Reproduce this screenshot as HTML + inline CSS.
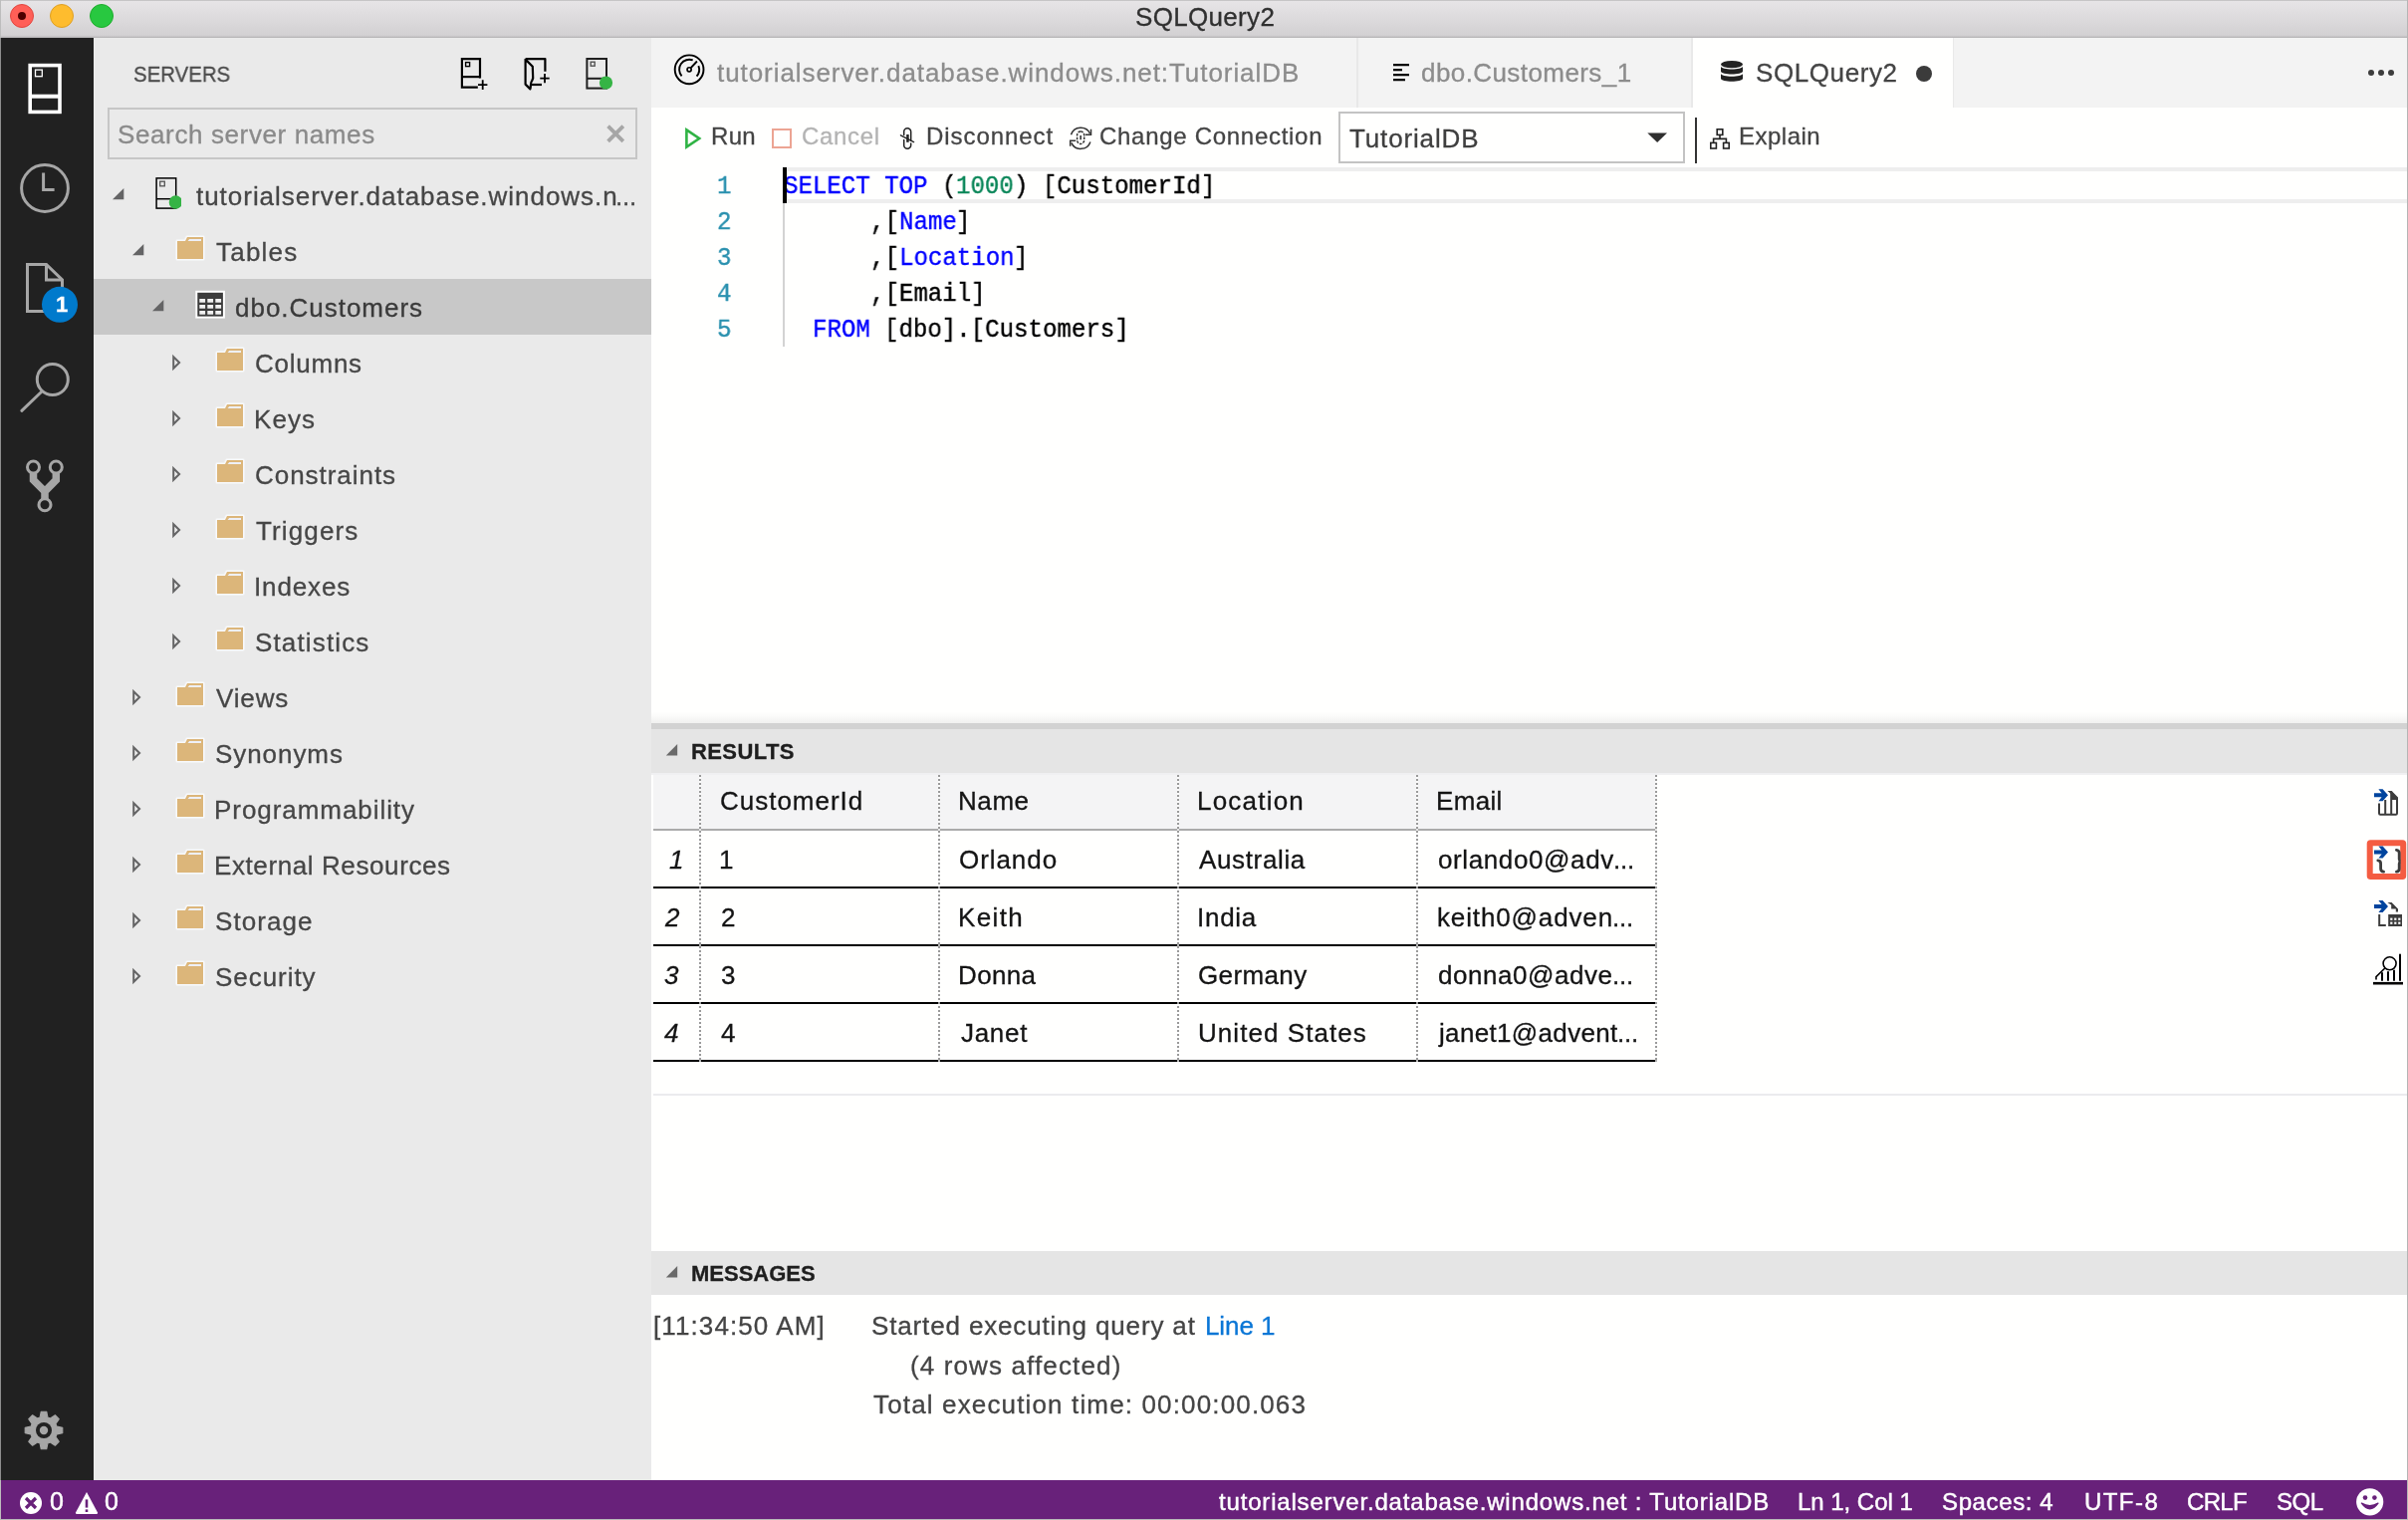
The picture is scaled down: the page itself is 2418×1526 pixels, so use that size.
<!DOCTYPE html>
<html><head><meta charset="utf-8"><title>SQLQuery2</title>
<style>
html,body{margin:0;padding:0;}
body{width:2418px;height:1526px;overflow:hidden;position:relative;background:#fffffe;font-family:"Liberation Sans",sans-serif;}
.b{position:absolute;display:block;}
.t{position:absolute;white-space:pre;font-family:"Liberation Sans",sans-serif;-webkit-text-stroke:0.3px currentColor;will-change:transform;}
.m{font-family:"Liberation Mono",monospace;font-size:26.5px;line-height:36px;letter-spacing:0;transform:scaleX(0.9088);transform-origin:0 0;-webkit-text-stroke:0.4px currentColor;}
</style></head><body>
<div class="b" style="left:0px;top:0px;width:2418px;height:38px;background:linear-gradient(#e8e6e8 0px,#e6e4e6 2px,#d3d1d3 35px,#cfcdcf 36px,#b9b7b9 37.5px);"></div>
<div class="b" style="left:0px;top:0px;width:2418px;height:1px;background:#c6c5c6;"></div>
<div class="b" style="left:10px;top:4px;width:24px;height:24px;background:#ff5f57;border-radius:50%;box-sizing:border-box;border:1px solid #e2463f;"></div>
<div class="b" style="left:50px;top:4px;width:24px;height:24px;background:#febc2e;border-radius:50%;box-sizing:border-box;border:1px solid #dfa023;"></div>
<div class="b" style="left:90px;top:4px;width:24px;height:24px;background:#28c840;border-radius:50%;box-sizing:border-box;border:1px solid #1dad2b;"></div>
<div class="b" style="left:18px;top:12px;width:8px;height:8px;background:#4d0000;border-radius:50%;"></div>
<span class="t" style="left:1139.75px;top:-1.51px;font-size:26px;line-height:36px;color:#303030;letter-spacing:0.319px;">SQLQuery2</span>
<div class="b" style="left:0px;top:38px;width:94px;height:1448px;background:#212121;"></div>
<div class="b" style="left:94px;top:38px;width:560px;height:1448px;background:#eaeaea;"></div>
<div class="b" style="left:654px;top:38px;width:1764px;height:70px;background:#f3f3f3;"></div>
<div class="b" style="left:654px;top:108px;width:1764px;height:1378px;background:#fffffe;"></div>
<div class="b" style="left:0px;top:1486px;width:2418px;height:40px;background:#68217a;"></div>
<svg class="b" style="left:0px;top:38px;" width="94" height="1448" viewBox="0 0 94 1448">
<g fill="none" stroke="#fff">
 <rect x="30.2" y="27.6" width="29.8" height="46.8" stroke-width="3.6"/>
 <line x1="30" y1="58.7" x2="60" y2="58.7" stroke-width="4"/>
 <rect x="35.5" y="32.1" width="6.8" height="6.6" stroke-width="1.3"/>
</g>
<g fill="none" stroke="#a6a6a6" stroke-width="3">
 <circle cx="45" cy="151" r="23.4"/>
 <path d="M43.6 135.5V152.5H54.6" stroke-width="3"/>
 <path d="M27.5 227.5H46.5L62.5 243V274.5H27.5Z"/>
 <path d="M46.5 227.5V243H62.5"/>
 <circle cx="52.8" cy="343" r="15.5"/>
 <path d="M41.5 355.5L21.8 374.3" stroke-linecap="round"/>
 <circle cx="33.5" cy="431" r="6"/>
 <circle cx="56.3" cy="431" r="6"/>
 <circle cx="45" cy="468.8" r="6"/>
</g>
<path d="M33.5 437V444L45 455.5L56.3 444V437M45 455V463" fill="none" stroke="#a6a6a6" stroke-width="7.5"/>
<circle cx="60" cy="267.8" r="18" fill="#007acc"/>
</svg>
<span class="t" style="left:56.20px;top:290.38px;font-size:22px;line-height:32px;color:#fff;letter-spacing:0.000px;font-weight:bold;">1</span>
<svg class="b" style="left:0px;top:1400px;" width="94" height="80" viewBox="0 0 94 80"><path d="M40.10 22.97L41.25 17.20L46.75 17.20L47.90 22.97L50.46 24.03L55.35 20.76L59.24 24.65L55.97 29.54L57.03 32.10L62.80 33.25L62.80 38.75L57.03 39.90L55.97 42.46L59.24 47.35L55.35 51.24L50.46 47.97L47.90 49.03L46.75 54.80L41.25 54.80L40.10 49.03L37.54 47.97L32.65 51.24L28.76 47.35L32.03 42.46L30.97 39.90L25.20 38.75L25.20 33.25L30.97 32.10L32.03 29.54L28.76 24.65L32.65 20.76L37.54 24.03Z" fill="#a6a6a6" stroke="#a6a6a6" stroke-width="1.1" stroke-linejoin="round"/><circle cx="44" cy="36" r="8" fill="#212121"/><circle cx="44" cy="36" r="4.2" fill="#a6a6a6"/></svg>
<span class="t" style="left:134.20px;top:58.58px;font-size:22px;line-height:32px;color:#4b4b4b;letter-spacing:0.000px;transform:scaleX(0.928);transform-origin:0 50%;">SERVERS</span>
<svg class="b" style="left:455px;top:50px;" width="170" height="48" viewBox="0 0 170 48">
<g fill="none" stroke="#000" stroke-width="2.2">
 <path d="M24.8 37.6H8.9V9.1H27V28.5"/>
 <line x1="8.9" y1="27.1" x2="27" y2="27.1"/>
 <path d="M25 35.1H34.4M29.7 30.2V40" stroke-width="1.8"/>
</g>
<rect x="12.6" y="12.6" width="4" height="4" fill="none" stroke="#000" stroke-width="1.4"/>
<g fill="none" stroke="#000" stroke-width="2.2" stroke-linejoin="round">
 <path d="M72.6 9.1H92.4V21.8"/>
 <path d="M72.6 9.1V34.6L77.4 39.4C78.5 37 77 33 79.2 31L80.2 28.5L79.8 16.8L72.6 9.6"/>
 <path d="M79 35H89"/>
 <path d="M87.3 28.6H96.7M92 23.9V33.3" stroke-width="1.8"/>
</g>
<g fill="none" stroke="#1f1f1f" stroke-width="2">
 <rect x="134.4" y="9" width="19.6" height="29.6"/>
 <line x1="134.4" y1="28.8" x2="154" y2="28.8"/>
</g>
<rect x="138.2" y="12.2" width="4" height="4" fill="none" stroke="#555" stroke-width="1.4"/>
<circle cx="153.5" cy="33" r="6.6" fill="#35b445"/>
</svg>
<div class="b" style="left:108px;top:108px;width:532px;height:52px;background:#eaeaea;box-sizing:border-box;border:2px solid #c6c6c6;"></div>
<span class="t" style="left:118.26px;top:117.29px;font-size:26px;line-height:36px;color:#8a8a8a;letter-spacing:0.616px;">Search server names</span>
<svg class="b" style="left:606px;top:122px;" width="24" height="24" viewBox="0 0 24 24"><path d="M4.6 4.6L19.8 19.8M19.8 4.6L4.6 19.8" stroke="#a6a6a6" stroke-width="3.8" fill="none"/></svg>
<div class="b" style="left:94px;top:280px;width:560px;height:56px;background:#c8c8c8;"></div>
<svg class="b" style="left:112.7px;top:189px;" width="12" height="12" viewBox="0 0 12 12"><path d="M11.3 0V11.3H0Z" fill="#646465"/></svg>
<svg class="b" style="left:155.5px;top:176px;" width="26" height="36" viewBox="0 0 26 36">
<g fill="none" stroke="#000" stroke-width="1.5">
 <rect x="1.1" y="2.9" width="19.6" height="30.2"/>
 <line x1="1.1" y1="23.7" x2="20.7" y2="23.7"/>
</g>
<rect x="4.7" y="6.2" width="4.6" height="4.6" fill="none" stroke="#555" stroke-width="1.3"/>
<circle cx="20.4" cy="27" r="6.7" fill="#35b445"/></svg>
<span class="t" style="left:196.85px;top:178.99px;font-size:26px;line-height:36px;color:#464646;letter-spacing:0.970px;">tutorialserver.database.windows.n</span>
<span class="t" style="left:618.00px;top:178.99px;font-size:26px;line-height:36px;color:#464646;letter-spacing:-0.200px;">...</span>
<svg class="b" style="left:132.7px;top:245px;" width="12" height="12" viewBox="0 0 12 12"><path d="M11.3 0V11.3H0Z" fill="#646465"/></svg>
<svg class="b" style="left:174.0px;top:234px;" width="36" height="30" viewBox="0 0 36 30">
<path d="M4 8H12L14 4H30V26H4Z" fill="#f8f9fc" stroke="#f8f9fc" stroke-width="3.6" stroke-linejoin="round" opacity="0.55"/>
<path d="M4 8H12L14 4H30V26H4Z" fill="#f8f9fc" stroke="#f8f9fc" stroke-width="2.4" stroke-linejoin="round"/>
<path d="M4 8H12L14 4H30V26H4Z" fill="#dcb67a"/>
<path d="M16.2 6H28V8H14.6Z" fill="#eef0f8"/></svg>
<span class="t" style="left:217.02px;top:234.99px;font-size:26px;line-height:36px;color:#464646;letter-spacing:1.225px;">Tables</span>
<svg class="b" style="left:152.7px;top:301px;" width="12" height="12" viewBox="0 0 12 12"><path d="M11.3 0V11.3H0Z" fill="#646465"/></svg>
<svg class="b" style="left:196.3px;top:291px;" width="31" height="30" viewBox="0 0 31 30"><rect x="0.3" y="0.8" width="29.6" height="27.8" fill="#fff"/><rect x="2.3" y="2.8" width="25.6" height="23.8" fill="#3c3c3c"/><rect x="4.3" y="9.0" width="5.8" height="3.7" fill="#f1f1f1"/><rect x="12.3" y="9.0" width="5.8" height="3.7" fill="#f1f1f1"/><rect x="20.3" y="9.0" width="5.8" height="3.7" fill="#f1f1f1"/><rect x="4.3" y="15.0" width="5.8" height="3.7" fill="#f1f1f1"/><rect x="12.3" y="15.0" width="5.8" height="3.7" fill="#f1f1f1"/><rect x="20.3" y="15.0" width="5.8" height="3.7" fill="#f1f1f1"/><rect x="4.3" y="21.0" width="5.8" height="3.7" fill="#f1f1f1"/><rect x="12.3" y="21.0" width="5.8" height="3.7" fill="#f1f1f1"/><rect x="20.3" y="21.0" width="5.8" height="3.7" fill="#f1f1f1"/></svg>
<span class="t" style="left:236.11px;top:290.99px;font-size:26px;line-height:36px;color:#3a3a3a;letter-spacing:0.983px;">dbo.Customers</span>
<svg class="b" style="left:173.2px;top:355px;" width="10" height="18" viewBox="0 0 10 18"><path d="M1.2 3.2L7.1 9L1.2 14.8Z" fill="none" stroke="#646465" stroke-width="2"/></svg>
<svg class="b" style="left:214.0px;top:346px;" width="36" height="30" viewBox="0 0 36 30">
<path d="M4 8H12L14 4H30V26H4Z" fill="#f8f9fc" stroke="#f8f9fc" stroke-width="3.6" stroke-linejoin="round" opacity="0.55"/>
<path d="M4 8H12L14 4H30V26H4Z" fill="#f8f9fc" stroke="#f8f9fc" stroke-width="2.4" stroke-linejoin="round"/>
<path d="M4 8H12L14 4H30V26H4Z" fill="#dcb67a"/>
<path d="M16.2 6H28V8H14.6Z" fill="#eef0f8"/></svg>
<span class="t" style="left:255.98px;top:346.99px;font-size:26px;line-height:36px;color:#464646;letter-spacing:0.752px;">Columns</span>
<svg class="b" style="left:173.2px;top:411px;" width="10" height="18" viewBox="0 0 10 18"><path d="M1.2 3.2L7.1 9L1.2 14.8Z" fill="none" stroke="#646465" stroke-width="2"/></svg>
<svg class="b" style="left:214.0px;top:402px;" width="36" height="30" viewBox="0 0 36 30">
<path d="M4 8H12L14 4H30V26H4Z" fill="#f8f9fc" stroke="#f8f9fc" stroke-width="3.6" stroke-linejoin="round" opacity="0.55"/>
<path d="M4 8H12L14 4H30V26H4Z" fill="#f8f9fc" stroke="#f8f9fc" stroke-width="2.4" stroke-linejoin="round"/>
<path d="M4 8H12L14 4H30V26H4Z" fill="#dcb67a"/>
<path d="M16.2 6H28V8H14.6Z" fill="#eef0f8"/></svg>
<span class="t" style="left:255.15px;top:402.99px;font-size:26px;line-height:36px;color:#464646;letter-spacing:1.059px;">Keys</span>
<svg class="b" style="left:173.2px;top:467px;" width="10" height="18" viewBox="0 0 10 18"><path d="M1.2 3.2L7.1 9L1.2 14.8Z" fill="none" stroke="#646465" stroke-width="2"/></svg>
<svg class="b" style="left:214.0px;top:458px;" width="36" height="30" viewBox="0 0 36 30">
<path d="M4 8H12L14 4H30V26H4Z" fill="#f8f9fc" stroke="#f8f9fc" stroke-width="3.6" stroke-linejoin="round" opacity="0.55"/>
<path d="M4 8H12L14 4H30V26H4Z" fill="#f8f9fc" stroke="#f8f9fc" stroke-width="2.4" stroke-linejoin="round"/>
<path d="M4 8H12L14 4H30V26H4Z" fill="#dcb67a"/>
<path d="M16.2 6H28V8H14.6Z" fill="#eef0f8"/></svg>
<span class="t" style="left:255.98px;top:458.99px;font-size:26px;line-height:36px;color:#464646;letter-spacing:0.962px;">Constraints</span>
<svg class="b" style="left:173.2px;top:523px;" width="10" height="18" viewBox="0 0 10 18"><path d="M1.2 3.2L7.1 9L1.2 14.8Z" fill="none" stroke="#646465" stroke-width="2"/></svg>
<svg class="b" style="left:214.0px;top:514px;" width="36" height="30" viewBox="0 0 36 30">
<path d="M4 8H12L14 4H30V26H4Z" fill="#f8f9fc" stroke="#f8f9fc" stroke-width="3.6" stroke-linejoin="round" opacity="0.55"/>
<path d="M4 8H12L14 4H30V26H4Z" fill="#f8f9fc" stroke="#f8f9fc" stroke-width="2.4" stroke-linejoin="round"/>
<path d="M4 8H12L14 4H30V26H4Z" fill="#dcb67a"/>
<path d="M16.2 6H28V8H14.6Z" fill="#eef0f8"/></svg>
<span class="t" style="left:257.02px;top:514.99px;font-size:26px;line-height:36px;color:#464646;letter-spacing:1.132px;">Triggers</span>
<svg class="b" style="left:173.2px;top:579px;" width="10" height="18" viewBox="0 0 10 18"><path d="M1.2 3.2L7.1 9L1.2 14.8Z" fill="none" stroke="#646465" stroke-width="2"/></svg>
<svg class="b" style="left:214.0px;top:570px;" width="36" height="30" viewBox="0 0 36 30">
<path d="M4 8H12L14 4H30V26H4Z" fill="#f8f9fc" stroke="#f8f9fc" stroke-width="3.6" stroke-linejoin="round" opacity="0.55"/>
<path d="M4 8H12L14 4H30V26H4Z" fill="#f8f9fc" stroke="#f8f9fc" stroke-width="2.4" stroke-linejoin="round"/>
<path d="M4 8H12L14 4H30V26H4Z" fill="#dcb67a"/>
<path d="M16.2 6H28V8H14.6Z" fill="#eef0f8"/></svg>
<span class="t" style="left:255.44px;top:570.99px;font-size:26px;line-height:36px;color:#464646;letter-spacing:0.855px;">Indexes</span>
<svg class="b" style="left:173.2px;top:635px;" width="10" height="18" viewBox="0 0 10 18"><path d="M1.2 3.2L7.1 9L1.2 14.8Z" fill="none" stroke="#646465" stroke-width="2"/></svg>
<svg class="b" style="left:214.0px;top:626px;" width="36" height="30" viewBox="0 0 36 30">
<path d="M4 8H12L14 4H30V26H4Z" fill="#f8f9fc" stroke="#f8f9fc" stroke-width="3.6" stroke-linejoin="round" opacity="0.55"/>
<path d="M4 8H12L14 4H30V26H4Z" fill="#f8f9fc" stroke="#f8f9fc" stroke-width="2.4" stroke-linejoin="round"/>
<path d="M4 8H12L14 4H30V26H4Z" fill="#dcb67a"/>
<path d="M16.2 6H28V8H14.6Z" fill="#eef0f8"/></svg>
<span class="t" style="left:255.80px;top:626.99px;font-size:26px;line-height:36px;color:#464646;letter-spacing:1.149px;">Statistics</span>
<svg class="b" style="left:133.2px;top:691px;" width="10" height="18" viewBox="0 0 10 18"><path d="M1.2 3.2L7.1 9L1.2 14.8Z" fill="none" stroke="#646465" stroke-width="2"/></svg>
<svg class="b" style="left:174.0px;top:682px;" width="36" height="30" viewBox="0 0 36 30">
<path d="M4 8H12L14 4H30V26H4Z" fill="#f8f9fc" stroke="#f8f9fc" stroke-width="3.6" stroke-linejoin="round" opacity="0.55"/>
<path d="M4 8H12L14 4H30V26H4Z" fill="#f8f9fc" stroke="#f8f9fc" stroke-width="2.4" stroke-linejoin="round"/>
<path d="M4 8H12L14 4H30V26H4Z" fill="#dcb67a"/>
<path d="M16.2 6H28V8H14.6Z" fill="#eef0f8"/></svg>
<span class="t" style="left:216.96px;top:682.99px;font-size:26px;line-height:36px;color:#464646;letter-spacing:0.859px;">Views</span>
<svg class="b" style="left:133.2px;top:747px;" width="10" height="18" viewBox="0 0 10 18"><path d="M1.2 3.2L7.1 9L1.2 14.8Z" fill="none" stroke="#646465" stroke-width="2"/></svg>
<svg class="b" style="left:174.0px;top:738px;" width="36" height="30" viewBox="0 0 36 30">
<path d="M4 8H12L14 4H30V26H4Z" fill="#f8f9fc" stroke="#f8f9fc" stroke-width="3.6" stroke-linejoin="round" opacity="0.55"/>
<path d="M4 8H12L14 4H30V26H4Z" fill="#f8f9fc" stroke="#f8f9fc" stroke-width="2.4" stroke-linejoin="round"/>
<path d="M4 8H12L14 4H30V26H4Z" fill="#dcb67a"/>
<path d="M16.2 6H28V8H14.6Z" fill="#eef0f8"/></svg>
<span class="t" style="left:215.80px;top:738.99px;font-size:26px;line-height:36px;color:#464646;letter-spacing:0.931px;">Synonyms</span>
<svg class="b" style="left:133.2px;top:803px;" width="10" height="18" viewBox="0 0 10 18"><path d="M1.2 3.2L7.1 9L1.2 14.8Z" fill="none" stroke="#646465" stroke-width="2"/></svg>
<svg class="b" style="left:174.0px;top:794px;" width="36" height="30" viewBox="0 0 36 30">
<path d="M4 8H12L14 4H30V26H4Z" fill="#f8f9fc" stroke="#f8f9fc" stroke-width="3.6" stroke-linejoin="round" opacity="0.55"/>
<path d="M4 8H12L14 4H30V26H4Z" fill="#f8f9fc" stroke="#f8f9fc" stroke-width="2.4" stroke-linejoin="round"/>
<path d="M4 8H12L14 4H30V26H4Z" fill="#dcb67a"/>
<path d="M16.2 6H28V8H14.6Z" fill="#eef0f8"/></svg>
<span class="t" style="left:215.15px;top:794.99px;font-size:26px;line-height:36px;color:#464646;letter-spacing:0.942px;">Programmability</span>
<svg class="b" style="left:133.2px;top:859px;" width="10" height="18" viewBox="0 0 10 18"><path d="M1.2 3.2L7.1 9L1.2 14.8Z" fill="none" stroke="#646465" stroke-width="2"/></svg>
<svg class="b" style="left:174.0px;top:850px;" width="36" height="30" viewBox="0 0 36 30">
<path d="M4 8H12L14 4H30V26H4Z" fill="#f8f9fc" stroke="#f8f9fc" stroke-width="3.6" stroke-linejoin="round" opacity="0.55"/>
<path d="M4 8H12L14 4H30V26H4Z" fill="#f8f9fc" stroke="#f8f9fc" stroke-width="2.4" stroke-linejoin="round"/>
<path d="M4 8H12L14 4H30V26H4Z" fill="#dcb67a"/>
<path d="M16.2 6H28V8H14.6Z" fill="#eef0f8"/></svg>
<span class="t" style="left:215.15px;top:850.99px;font-size:26px;line-height:36px;color:#464646;letter-spacing:0.599px;">External Resources</span>
<svg class="b" style="left:133.2px;top:915px;" width="10" height="18" viewBox="0 0 10 18"><path d="M1.2 3.2L7.1 9L1.2 14.8Z" fill="none" stroke="#646465" stroke-width="2"/></svg>
<svg class="b" style="left:174.0px;top:906px;" width="36" height="30" viewBox="0 0 36 30">
<path d="M4 8H12L14 4H30V26H4Z" fill="#f8f9fc" stroke="#f8f9fc" stroke-width="3.6" stroke-linejoin="round" opacity="0.55"/>
<path d="M4 8H12L14 4H30V26H4Z" fill="#f8f9fc" stroke="#f8f9fc" stroke-width="2.4" stroke-linejoin="round"/>
<path d="M4 8H12L14 4H30V26H4Z" fill="#dcb67a"/>
<path d="M16.2 6H28V8H14.6Z" fill="#eef0f8"/></svg>
<span class="t" style="left:215.80px;top:906.99px;font-size:26px;line-height:36px;color:#464646;letter-spacing:1.063px;">Storage</span>
<svg class="b" style="left:133.2px;top:971px;" width="10" height="18" viewBox="0 0 10 18"><path d="M1.2 3.2L7.1 9L1.2 14.8Z" fill="none" stroke="#646465" stroke-width="2"/></svg>
<svg class="b" style="left:174.0px;top:962px;" width="36" height="30" viewBox="0 0 36 30">
<path d="M4 8H12L14 4H30V26H4Z" fill="#f8f9fc" stroke="#f8f9fc" stroke-width="3.6" stroke-linejoin="round" opacity="0.55"/>
<path d="M4 8H12L14 4H30V26H4Z" fill="#f8f9fc" stroke="#f8f9fc" stroke-width="2.4" stroke-linejoin="round"/>
<path d="M4 8H12L14 4H30V26H4Z" fill="#dcb67a"/>
<path d="M16.2 6H28V8H14.6Z" fill="#eef0f8"/></svg>
<span class="t" style="left:215.80px;top:962.99px;font-size:26px;line-height:36px;color:#464646;letter-spacing:0.950px;">Security</span>
<svg class="b" style="left:674px;top:52px;" width="36" height="36" viewBox="0 0 36 36">
<g fill="none" stroke="#000" stroke-width="1.9">
 <circle cx="18.1" cy="17.8" r="14.4"/>
 <path d="M10.55 24.36A10.0 10.0 0 0 1 21.68 8.46"/>
 <path d="M27.37 14.05A10.0 10.0 0 0 1 25.53 24.49"/>
 <path d="M19.70 16.10L25.90 9.50"/>
 <circle cx="18.1" cy="17.8" r="2.05" stroke-width="1.7"/>
</g></svg>
<span class="t" style="left:720.01px;top:54.59px;font-size:26px;line-height:36px;color:#8c8c8c;letter-spacing:0.929px;">tutorialserver.database.windows.net:TutorialDB</span>
<div class="b" style="left:1362px;top:38px;width:2px;height:70px;background:#e8e8e8;"></div>
<svg class="b" style="left:1396px;top:60px;" width="24" height="24" viewBox="0 0 24 24"><path d="M3 5.1H19M3 10.1H12M3 15.1H19M3 20.1H15" stroke="#000" stroke-width="2.1" fill="none"/></svg>
<span class="t" style="left:1426.87px;top:54.59px;font-size:26px;line-height:36px;color:#8c8c8c;letter-spacing:0.421px;">dbo.Customers_1</span>
<div class="b" style="left:1699px;top:38px;width:262px;height:70px;background:#fffffe;"></div>
<div class="b" style="left:1698px;top:38px;width:1.5px;height:70px;background:#e9e9e9;"></div>
<div class="b" style="left:1960.5px;top:38px;width:1.5px;height:70px;background:#e9e9e9;"></div>
<svg class="b" style="left:1724px;top:58px;" width="30" height="28" viewBox="0 0 30 28">
<g fill="#222">
 <ellipse cx="15" cy="6.6" rx="11" ry="3.6"/>
 <path d="M4 8.6C4 12.6 26 12.6 26 8.6V13.6C26 17.6 4 17.6 4 13.6Z"/>
 <path d="M4 15.8C4 19.8 26 19.8 26 15.8V20.8C26 24.8 4 24.8 4 20.8Z"/>
</g></svg>
<span class="t" style="left:1763.41px;top:54.69px;font-size:26px;line-height:36px;color:#444;letter-spacing:0.591px;">SQLQuery2</span>
<div class="b" style="left:1924px;top:66px;width:16px;height:16px;background:#3b3b3b;border-radius:50%;"></div>
<div class="b" style="left:2377.7000000000003px;top:69.8px;width:6.4px;height:6.4px;background:#3c3c3c;border-radius:50%;"></div>
<div class="b" style="left:2387.7000000000003px;top:69.8px;width:6.4px;height:6.4px;background:#3c3c3c;border-radius:50%;"></div>
<div class="b" style="left:2397.7000000000003px;top:69.8px;width:6.4px;height:6.4px;background:#3c3c3c;border-radius:50%;"></div>
<svg class="b" style="left:684px;top:124px;" width="24" height="30" viewBox="0 0 24 30"><path d="M5.4 6.4L18.2 15L5.4 23.6Z" fill="none" stroke="#2fb344" stroke-width="2.6" stroke-linejoin="miter"/></svg>
<span class="t" style="left:713.66px;top:120.48px;font-size:24px;line-height:34px;color:#444;letter-spacing:0.344px;">Run</span>
<div class="b" style="left:775px;top:128.5px;width:20px;height:20.5px;background:transparent;box-sizing:border-box;border:2.5px solid #eca493;"></div>
<span class="t" style="left:805.31px;top:120.48px;font-size:24px;line-height:34px;color:#b3b3b3;letter-spacing:0.679px;">Cancel</span>
<svg class="b" style="left:900px;top:124px;" width="24" height="30" viewBox="0 0 24 30">
<g fill="none" stroke="#222" stroke-width="1.5" stroke-linecap="round">
 <path d="M7.7 11.6V8.3A3.5 3.5 0 0 1 14.7 8.3V17.2"/>
 <path d="M7.7 16.6V21.8A3.5 3.5 0 0 0 14.7 21.8V20"/>
 <path d="M4.4 11.8L17.6 18.6" stroke-width="1.3"/>
</g>
<rect x="10.2" y="11" width="2.5" height="7.8" fill="#222"/></svg>
<span class="t" style="left:929.66px;top:120.48px;font-size:24px;line-height:34px;color:#444;letter-spacing:0.933px;">Disconnect</span>
<svg class="b" style="left:1070px;top:123.2px;" width="30" height="30" viewBox="0 0 30 30">
<g fill="none" stroke="#333" stroke-width="1.5">
 <path d="M5.5 12.2A10.3 10.3 0 0 1 24.6 11.2"/>
 <path d="M24.9 19.4A10.3 10.3 0 0 1 5.8 20.4"/>
 <path d="M25.5 6.8V12.3H20"/>
 <path d="M4.7 23.8V18.3H10.2"/>
 <rect x="11.6" y="9" width="7.1" height="12.4" rx="3.55" stroke-dasharray="2.6 1.1"/>
 <path d="M15.15 13V17.2" stroke-width="1.6"/>
</g></svg>
<span class="t" style="left:1104.04px;top:120.48px;font-size:24px;line-height:34px;color:#444;letter-spacing:0.709px;">Change Connection</span>
<div class="b" style="left:1344.4px;top:112.4px;width:347.4px;height:51.4px;background:#fffffe;box-sizing:border-box;border:2px solid #c3c3c3;"></div>
<span class="t" style="left:1355.01px;top:120.59px;font-size:26px;line-height:36px;color:#3f3f3f;letter-spacing:0.848px;">TutorialDB</span>
<svg class="b" style="left:1650px;top:128px;" width="30" height="20" viewBox="0 0 30 20"><path d="M4.3 5.4H24L14.15 14.9Z" fill="#2f2f2f"/></svg>
<div class="b" style="left:1702px;top:118px;width:2px;height:46px;background:#333;"></div>
<svg class="b" style="left:1714px;top:126px;" width="28" height="28" viewBox="0 0 28 28">
<g fill="none" stroke="#222" stroke-width="1.6">
 <rect x="10.2" y="3.8" width="5.6" height="5.6"/>
 <rect x="3.8" y="17.4" width="5.6" height="5.6"/>
 <rect x="16.6" y="17.4" width="5.6" height="5.6"/>
 <path d="M13 9.4V13.4M6.6 17.4V13.4H19.4V17.4"/>
</g></svg>
<span class="t" style="left:1746.06px;top:120.48px;font-size:24px;line-height:34px;color:#444;letter-spacing:0.492px;">Explain</span>
<div class="b" style="left:786px;top:168px;width:1631px;height:4px;background:#eeeeee;"></div>
<div class="b" style="left:786px;top:200px;width:1631px;height:4px;background:#eeeeee;"></div>
<div class="b" style="left:786px;top:204px;width:2px;height:144px;background:#d3d3d3;"></div>
<span class="t m" style="left:719.60px;top:169.00px;color:#2b91af;">1</span>
<span class="t m" style="left:787.00px;top:169.00px;color:#0000ff;">SELECT TOP</span>
<span class="t m" style="left:945.95px;top:169.00px;color:#000000;">(</span>
<span class="t m" style="left:960.40px;top:169.00px;color:#098658;">1000</span>
<span class="t m" style="left:1018.20px;top:169.00px;color:#000000;">) [CustomerId]</span>
<span class="t m" style="left:719.60px;top:205.00px;color:#2b91af;">2</span>
<span class="t m" style="left:873.70px;top:205.00px;color:#000000;">,[</span>
<span class="t m" style="left:902.60px;top:205.00px;color:#0000ff;">Name</span>
<span class="t m" style="left:960.40px;top:205.00px;color:#000000;">]</span>
<span class="t m" style="left:719.60px;top:241.00px;color:#2b91af;">3</span>
<span class="t m" style="left:873.70px;top:241.00px;color:#000000;">,[</span>
<span class="t m" style="left:902.60px;top:241.00px;color:#0000ff;">Location</span>
<span class="t m" style="left:1018.20px;top:241.00px;color:#000000;">]</span>
<span class="t m" style="left:719.60px;top:277.00px;color:#2b91af;">4</span>
<span class="t m" style="left:873.70px;top:277.00px;color:#000000;">,[Email]</span>
<span class="t m" style="left:719.60px;top:313.00px;color:#2b91af;">5</span>
<span class="t m" style="left:815.90px;top:313.00px;color:#0000ff;">FROM</span>
<span class="t m" style="left:888.15px;top:313.00px;color:#000000;">[dbo].[Customers]</span>
<div class="b" style="left:786px;top:168px;width:4px;height:36px;background:#000;"></div>
<div class="b" style="left:654px;top:714px;width:1764px;height:12px;background:linear-gradient(rgba(0,0,0,0) 0%,rgba(0,0,0,0.015) 40%,rgba(0,0,0,0.06) 100%);"></div>
<div class="b" style="left:654px;top:726px;width:1764px;height:6px;background:#d2d2d2;"></div>
<div class="b" style="left:654px;top:732px;width:1764px;height:44px;background:#e5e5e5;"></div>
<div class="b" style="left:654px;top:776px;width:1764px;height:2px;background:#f0f0f2;"></div>
<svg class="b" style="left:668px;top:746px;" width="14" height="14" viewBox="0 0 14 14"><path d="M12.2 1V12.4H0.8Z" fill="#6a6a6a"/></svg>
<span class="t" style="left:693.83px;top:738.68px;font-size:22px;line-height:32px;color:#1e1e1e;letter-spacing:0.397px;font-weight:bold;">RESULTS</span>
<div class="b" style="left:656px;top:778px;width:1008px;height:54px;background:#f4f4f5;"></div>
<div class="b" style="left:656px;top:831.7px;width:1008px;height:2.2px;background:#ababab;"></div>
<span class="t" style="left:723.43px;top:786.49px;font-size:26px;line-height:36px;color:#141414;letter-spacing:0.979px;">CustomerId</span>
<span class="t" style="left:962.43px;top:786.49px;font-size:26px;line-height:36px;color:#141414;letter-spacing:0.573px;">Name</span>
<span class="t" style="left:1202.43px;top:786.49px;font-size:26px;line-height:36px;color:#141414;letter-spacing:1.216px;">Location</span>
<span class="t" style="left:1442.43px;top:786.49px;font-size:26px;line-height:36px;color:#141414;letter-spacing:0.341px;">Email</span>
<span class="t" style="left:671.99px;top:844.59px;font-size:26px;line-height:36px;color:#141414;letter-spacing:0.000px;font-style:italic;">1</span>
<span class="t" style="left:722.39px;top:844.59px;font-size:26px;line-height:36px;color:#141414;letter-spacing:0.000px;">1</span>
<span class="t" style="left:963.43px;top:844.59px;font-size:26px;line-height:36px;color:#141414;letter-spacing:0.933px;">Orlando</span>
<span class="t" style="left:1203.81px;top:844.59px;font-size:26px;line-height:36px;color:#141414;letter-spacing:0.644px;">Australia</span>
<span class="t" style="left:1443.58px;top:844.59px;font-size:26px;line-height:36px;color:#141414;letter-spacing:0.608px;">orlando0@adv</span>
<span class="t" style="left:1620.20px;top:844.59px;font-size:26px;line-height:36px;color:#141414;letter-spacing:-0.250px;">...</span>
<div class="b" style="left:656px;top:890px;width:1008px;height:2.2px;background:#000;"></div>
<span class="t" style="left:668.37px;top:902.59px;font-size:26px;line-height:36px;color:#141414;letter-spacing:0.000px;font-style:italic;">2</span>
<span class="t" style="left:723.75px;top:902.59px;font-size:26px;line-height:36px;color:#141414;letter-spacing:0.000px;">2</span>
<span class="t" style="left:962.45px;top:902.59px;font-size:26px;line-height:36px;color:#141414;letter-spacing:1.375px;">Keith</span>
<span class="t" style="left:1202.21px;top:902.59px;font-size:26px;line-height:36px;color:#141414;letter-spacing:0.726px;">India</span>
<span class="t" style="left:1443.42px;top:902.59px;font-size:26px;line-height:36px;color:#141414;letter-spacing:0.863px;">keith0@adven</span>
<span class="t" style="left:1618.60px;top:902.59px;font-size:26px;line-height:36px;color:#141414;letter-spacing:-0.250px;">...</span>
<div class="b" style="left:656px;top:948px;width:1008px;height:2.2px;background:#000;"></div>
<span class="t" style="left:667.16px;top:960.59px;font-size:26px;line-height:36px;color:#141414;letter-spacing:0.000px;font-style:italic;">3</span>
<span class="t" style="left:723.78px;top:960.59px;font-size:26px;line-height:36px;color:#141414;letter-spacing:0.000px;">3</span>
<span class="t" style="left:962.45px;top:960.59px;font-size:26px;line-height:36px;color:#141414;letter-spacing:0.357px;">Donna</span>
<span class="t" style="left:1202.73px;top:960.59px;font-size:26px;line-height:36px;color:#141414;letter-spacing:0.375px;">Germany</span>
<span class="t" style="left:1443.69px;top:960.59px;font-size:26px;line-height:36px;color:#141414;letter-spacing:0.542px;">donna0@adve</span>
<span class="t" style="left:1618.60px;top:960.59px;font-size:26px;line-height:36px;color:#141414;letter-spacing:-0.250px;">...</span>
<div class="b" style="left:656px;top:1006px;width:1008px;height:2.2px;background:#000;"></div>
<span class="t" style="left:667.17px;top:1018.59px;font-size:26px;line-height:36px;color:#141414;letter-spacing:0.000px;font-style:italic;">4</span>
<span class="t" style="left:723.67px;top:1018.59px;font-size:26px;line-height:36px;color:#141414;letter-spacing:0.000px;">4</span>
<span class="t" style="left:964.90px;top:1018.59px;font-size:26px;line-height:36px;color:#141414;letter-spacing:0.704px;">Janet</span>
<span class="t" style="left:1203.06px;top:1018.59px;font-size:26px;line-height:36px;color:#141414;letter-spacing:1.051px;">United States</span>
<span class="t" style="left:1445.23px;top:1018.59px;font-size:26px;line-height:36px;color:#141414;letter-spacing:0.335px;">janet1@advent</span>
<span class="t" style="left:1624.30px;top:1018.59px;font-size:26px;line-height:36px;color:#141414;letter-spacing:-0.250px;">...</span>
<div class="b" style="left:656px;top:1064px;width:1008px;height:2.2px;background:#000;"></div>
<div class="b" style="left:702px;top:778px;width:2px;height:288px;background:repeating-linear-gradient(#9a9a9a 0px,#9a9a9a 2px,rgba(255,255,255,0.7) 2px,rgba(255,255,255,0.7) 4px);"></div>
<div class="b" style="left:942px;top:778px;width:2px;height:288px;background:repeating-linear-gradient(#9a9a9a 0px,#9a9a9a 2px,rgba(255,255,255,0.7) 2px,rgba(255,255,255,0.7) 4px);"></div>
<div class="b" style="left:1182px;top:778px;width:2px;height:288px;background:repeating-linear-gradient(#9a9a9a 0px,#9a9a9a 2px,rgba(255,255,255,0.7) 2px,rgba(255,255,255,0.7) 4px);"></div>
<div class="b" style="left:1422px;top:778px;width:2px;height:288px;background:repeating-linear-gradient(#9a9a9a 0px,#9a9a9a 2px,rgba(255,255,255,0.7) 2px,rgba(255,255,255,0.7) 4px);"></div>
<div class="b" style="left:1662px;top:778px;width:2px;height:288px;background:repeating-linear-gradient(#9a9a9a 0px,#9a9a9a 2px,rgba(255,255,255,0.7) 2px,rgba(255,255,255,0.7) 4px);"></div>
<div class="b" style="left:656px;top:1098px;width:1761px;height:2px;background:#ebebee;"></div>
<svg class="b" style="left:2370px;top:784px;" width="47" height="210" viewBox="0 0 47 210">
<path d="M14 12.2H21.6L18.4 8.2H22.6L28 14.2L22.6 20.2H18.4L21.6 16.2H14Z" fill="#00449e"/>
<g fill="none" stroke="#3c3c3c" stroke-width="2">
 <path d="M19 22.6V32.6Q19 33.8 20.2 33.8H35.8Q37 33.8 37 32.6V17.6"/>
 <path d="M25.2 19V33M31.2 10.6V33"/>
 <path d="M31.2 18H37"/>
</g>
<path d="M27.4 10H31.6L38 16.4V18.4H31.2V13.2Z" fill="#3c3c3c"/>
<rect x="9.7" y="62.3" width="33.5" height="33.8" rx="0.8" fill="none" stroke="#f45c42" stroke-width="6"/>
<path d="M14 69.6H21.6L18.4 65.6H22.6L28 71.6L22.6 77.6H18.4L21.6 73.6H14Z" fill="#00449e"/>
<g fill="none" stroke="#3c3c3c" stroke-width="2.8" stroke-linecap="round">
 <path d="M17.8 79.8Q20.8 80 20.6 83V88Q20.6 91 23.6 91.2"/>
 <path d="M36.4 69.4Q39.4 69.6 39.2 72.6V78.4Q39.4 80.6 40.4 80.8Q39.4 81 39.2 83.2V88Q39.4 91 36.4 91.2"/>
</g>
<path d="M14 124H21.6L18.4 120H22.6L28 126L22.6 132H18.4L21.6 128H14Z" fill="#00449e"/>
<path d="M27.4 122H31.6L38 128.4V131.6H35.8V128.4H31.2V124.6Z" fill="#3c3c3c"/>
<path d="M19.2 134V145H25.8" fill="none" stroke="#3c3c3c" stroke-width="2"/>
<rect x="28.2" y="134" width="13.8" height="12" fill="#3c3c3c"/>
<g fill="#fff">
 <rect x="30.2" y="137.6" width="2.2" height="2.2"/><rect x="34.2" y="137.6" width="2.2" height="2.2"/><rect x="38.2" y="137.6" width="2.2" height="2.2"/>
 <rect x="30.2" y="141.6" width="2.2" height="2.2"/><rect x="34.2" y="141.6" width="2.2" height="2.2"/><rect x="38.2" y="141.6" width="2.2" height="2.2"/>
</g>
<g fill="none" stroke="#000">
 <circle cx="29.6" cy="183.3" r="6.5" stroke-width="1.6"/>
 <path d="M24.6 188.2L16 196.6V199" stroke-width="1.6" stroke-linecap="round"/>
 <path d="M22 193V200M28 192V200M34 190.5V200M40 174.6V200" stroke-width="2" stroke-linecap="round"/>
 <path d="M13 203.2H43" stroke-width="2.6"/>
</g>
</svg>
<div class="b" style="left:654px;top:1256px;width:1764px;height:44px;background:#e5e5e5;"></div>
<svg class="b" style="left:668px;top:1270px;" width="14" height="14" viewBox="0 0 14 14"><path d="M12.2 1V12.4H0.8Z" fill="#6a6a6a"/></svg>
<span class="t" style="left:693.83px;top:1262.68px;font-size:22px;line-height:32px;color:#1e1e1e;letter-spacing:-0.004px;font-weight:bold;">MESSAGES</span>
<span class="t" style="left:656.41px;top:1312.69px;font-size:26px;line-height:36px;color:#444;letter-spacing:1.097px;">[11:34:50 AM]</span>
<span class="t" style="left:875.40px;top:1312.69px;font-size:26px;line-height:36px;color:#444;letter-spacing:0.854px;">Started executing query at</span>
<span class="t" style="left:1209.59px;top:1312.69px;font-size:26px;line-height:36px;color:#0a76d6;letter-spacing:-0.094px;">Line 1</span>
<span class="t" style="left:914.08px;top:1352.69px;font-size:26px;line-height:36px;color:#444;letter-spacing:1.133px;">(4 rows affected)</span>
<span class="t" style="left:877.42px;top:1392.49px;font-size:26px;line-height:36px;color:#444;letter-spacing:1.148px;">Total execution time: 00:00:00.063</span>
<svg class="b" style="left:16px;top:1494px;" width="110" height="30" viewBox="0 0 110 30">
<circle cx="15" cy="15" r="11" fill="#fff"/>
<path d="M10 10L20 20M20 10L10 20" stroke="#68217a" stroke-width="3.2" fill="none"/>
<path d="M71 4L82 24.4Q82.3 26 80.8 26H61.2Q59.7 26 60 24.4Z" fill="#fff"/>
<path d="M71 11.4V19.6" stroke="#68217a" stroke-width="2.6" fill="none"/>
<rect x="69.7" y="21.4" width="2.6" height="2.6" fill="#68217a"/>
</svg>
<span class="t" style="left:50.20px;top:1490.44px;font-size:25px;line-height:35px;color:#ffffff;letter-spacing:0.000px;-webkit-text-stroke:0.45px #fff;">0</span>
<span class="t" style="left:105.40px;top:1490.44px;font-size:25px;line-height:35px;color:#ffffff;letter-spacing:0.000px;-webkit-text-stroke:0.45px #fff;">0</span>
<span class="t" style="left:1223.52px;top:1490.78px;font-size:24px;line-height:34px;color:#ffffff;letter-spacing:0.822px;-webkit-text-stroke:0.45px #fff;">tutorialserver.database.windows.net : TutorialDB</span>
<span class="t" style="left:1805.42px;top:1490.78px;font-size:24px;line-height:34px;color:#ffffff;letter-spacing:-0.030px;-webkit-text-stroke:0.45px #fff;">Ln 1, Col 1</span>
<span class="t" style="left:1950.28px;top:1490.78px;font-size:24px;line-height:34px;color:#ffffff;letter-spacing:0.622px;-webkit-text-stroke:0.45px #fff;">Spaces: 4</span>
<span class="t" style="left:2093.14px;top:1490.78px;font-size:24px;line-height:34px;color:#ffffff;letter-spacing:1.437px;-webkit-text-stroke:0.45px #fff;">UTF-8</span>
<span class="t" style="left:2196.08px;top:1490.78px;font-size:24px;line-height:34px;color:#ffffff;letter-spacing:-0.689px;-webkit-text-stroke:0.45px #fff;">CRLF</span>
<span class="t" style="left:2286.28px;top:1490.78px;font-size:24px;line-height:34px;color:#ffffff;letter-spacing:-0.464px;-webkit-text-stroke:0.45px #fff;">SQL</span>
<svg class="b" style="left:2364px;top:1492px;" width="32" height="32" viewBox="0 0 32 32">
<circle cx="15.7" cy="15.8" r="13.6" fill="#fff"/>
<circle cx="11" cy="11.6" r="2.3" fill="#68217a"/><circle cx="20.4" cy="11.6" r="2.3" fill="#68217a"/>
<path d="M7.4 17.2Q15.7 28.4 24 17.2Q15.7 22 7.4 17.2Z" fill="#68217a" stroke="#68217a" stroke-width="1.4" stroke-linejoin="round"/>
</svg>
<div class="b" style="left:0px;top:0px;width:1px;height:1526px;background:#bdbdbd;"></div>
<div class="b" style="left:2417px;top:0px;width:1px;height:1526px;background:#b5b5b5;"></div>
<div class="b" style="left:0px;top:1525px;width:2418px;height:1px;background:#b8b8b8;"></div>
<div class="b" style="left:0px;top:38px;width:1px;height:1448px;background:#8e8e8e;"></div>
</body></html>
